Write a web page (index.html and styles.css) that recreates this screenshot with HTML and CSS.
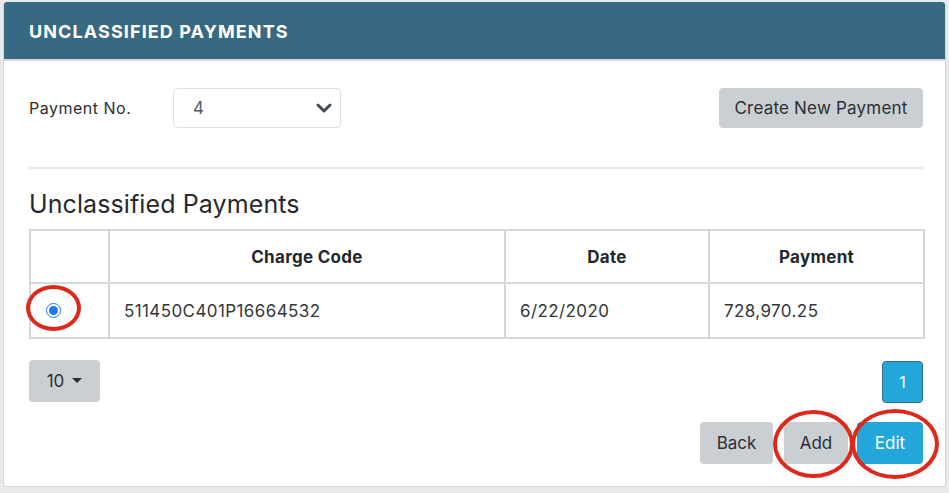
FILE: index.html
```html
<!DOCTYPE html>
<html>
<head>
<meta charset="utf-8">
<link rel="stylesheet" href="styles.css">
</head>
<body>
<div class="card">
  <div class="card-header">UNCLASSIFIED PAYMENTS</div>
  <div class="card-body">
    <div class="top-row">
      <div class="field">
        <label class="field-label">Payment No.</label>
        <div class="select">
          <span class="select-value">4</span>
          <svg class="chevron" width="16" height="12" viewBox="0 0 16 12"><path d="M2 3 L8 9 L14 3" fill="none" stroke="#454c53" stroke-width="3" stroke-linecap="round" stroke-linejoin="round"/></svg>
        </div>
      </div>
      <button class="btn btn-gray btn-create">Create New Payment</button>
    </div>
    <div class="divider"></div>
    <h2 class="section-title">Unclassified Payments</h2>
    <table class="grid">
      <colgroup>
        <col class="c-sel"><col class="c-code"><col class="c-date"><col class="c-pay">
      </colgroup>
      <thead>
        <tr><th></th><th>Charge Code</th><th>Date</th><th>Payment</th></tr>
      </thead>
      <tbody>
        <tr>
          <td class="sel-cell"><span class="radio-wrap"><input type="radio" checked class="radio"><span class="mark mark-radio"></span></span></td>
          <td>511450C401P16664532</td>
          <td>6/22/2020</td>
          <td>728,970.25</td>
        </tr>
      </tbody>
    </table>
    <div class="pager-row">
      <button class="btn btn-gray btn-size">10 <span class="caret"></span></button>
      <button class="page-btn">1</button>
    </div>
    <div class="action-row">
      <button class="btn btn-gray btn-back">Back</button>
      <span class="mark-host"><button class="btn btn-gray btn-add">Add</button><span class="mark mark-add"></span></span>
      <span class="mark-host"><button class="btn btn-blue btn-edit">Edit</button><span class="mark mark-edit"></span></span>
    </div>
  </div>
</div>
</body>
</html>
```
FILE: styles.css
```css
* { box-sizing: border-box; }
html, body { margin: 0; padding: 0; }
body {
  background: #e8eaec;
  font-family: Inter, "Noto Sans", "Liberation Sans", sans-serif;
  color: #2b2f33;
  width: 949px;
  height: 493px;
  overflow: hidden;
}
.card {
  margin: 2px 0 0 3px;
  width: 943px;
  height: 485px;
  background: #fff;
  border: 1px solid #d3d7da;
  border-top: none;
  border-radius: 3px;
}
.card-header {
  height: 59px;
  background: #376a82;
  border-bottom: 2px solid #d5d9dc;
  color: #fff;
  font-weight: 700;
  font-size: 18px;
  letter-spacing: 1.1px;
  padding-left: 25px;
  line-height: 59px;
  border-radius: 3px 3px 0 0;
}
.card-body {
  padding: 0 22px 0 25px;
}
.top-row {
  margin-top: 27px;
  height: 40px;
  display: flex;
  justify-content: space-between;
  align-items: center;
}
.field { display: flex; align-items: center; }
.field-label {
  font-size: 16px;
  letter-spacing: 0.5px;
  color: #2b2f33;
  width: 144px;
}
.select {
  width: 168px;
  height: 40px;
  border: 1px solid #dde1e4;
  border-radius: 4px;
  display: flex;
  align-items: center;
  justify-content: space-between;
  padding: 0 8px 0 19px;
}
.select-value { font-size: 17px; color: #555b61; }
.chevron { display: block; }
.btn {
  font-family: inherit;
  border: none;
  border-radius: 4px;
  font-size: 17px;
  height: 42px;
  padding: 0;
  cursor: pointer;
}
.btn-gray { background: #c9cfd3; color: #2b2f33; }
.btn-blue { background: #23a7da; color: #fff; }
.btn-create { width: 204px; height: 40px; letter-spacing: 0.2px; }
.divider {
  margin-top: 39px;
  height: 2px;
  background: #e5e8ea;
}
.section-title {
  margin: 20px 0 0;
  font-size: 25px;
  line-height: 30px;
  font-weight: 400;
  letter-spacing: 0.1px;
  color: #262a2e;
}
.grid {
  margin-top: 10px;
  width: 894px;
  border-collapse: collapse;
  table-layout: fixed;
}
.c-sel { width: 79px; }
.c-code { width: 396px; }
.c-date { width: 204px; }
.c-pay { width: 215px; }
.grid th, .grid td {
  border: 2px solid #d3d8dc;
  font-size: 17px;
}
.grid th {
  height: 53px;
  font-weight: 700;
  letter-spacing: 0.3px;
  color: #24282c;
  text-align: center;
}
.grid td {
  height: 55px;
  padding: 0 0 0 14px;
  letter-spacing: 0.4px;
  color: #33373b;
}
.grid td.sel-cell { padding: 0; text-align: center; }
.radio-wrap {
  position: relative;
  display: inline-block;
  width: 15px;
  height: 15px;
  vertical-align: middle;
  left: -16px;
  top: -1px;
}
.radio {
  margin: 0;
  width: 15px;
  height: 15px;
  accent-color: #1f78f0;
  display: block;
}
.mark {
  position: absolute;
  border: 4px solid #df271b;
  border-radius: 50%;
  pointer-events: none;
}
.mark-radio {
  width: 55px;
  height: 46px;
  left: -20px;
  top: -18px;
}
.pager-row {
  margin-top: 21px;
  display: flex;
  justify-content: space-between;
  align-items: flex-start;
}
.btn-size {
  width: 71px;
  display: flex;
  align-items: center;
  justify-content: center;
  gap: 8px;
}
.caret {
  display: inline-block;
  width: 0; height: 0;
  border-left: 5px solid transparent;
  border-right: 5px solid transparent;
  border-top: 5px solid #2b2f33;
  margin-top: -2px;
}
.page-btn {
  margin-top: 1px;
  width: 41px;
  height: 42px;
  background: #23a7da;
  color: #fff;
  border: 1px solid #2e6f8a;
  border-radius: 4px;
  font-family: inherit;
  font-size: 16px;
  padding: 0;
}
.action-row {
  margin-top: 19px;
  display: flex;
  justify-content: flex-end;
  align-items: center;
}
.btn-back { width: 73px; margin-right: 11px; }
.btn-add { width: 64px; }
.btn-edit { width: 66px; }
.mark-host { position: relative; display: inline-block; height: 42px; }
.mark-host + .mark-host { margin-left: 9px; }
.mark-add { left: -11px; top: -12px; width: 81px; height: 68px; }
.mark-edit { left: -6px; top: -13px; width: 88px; height: 70px; }
```
